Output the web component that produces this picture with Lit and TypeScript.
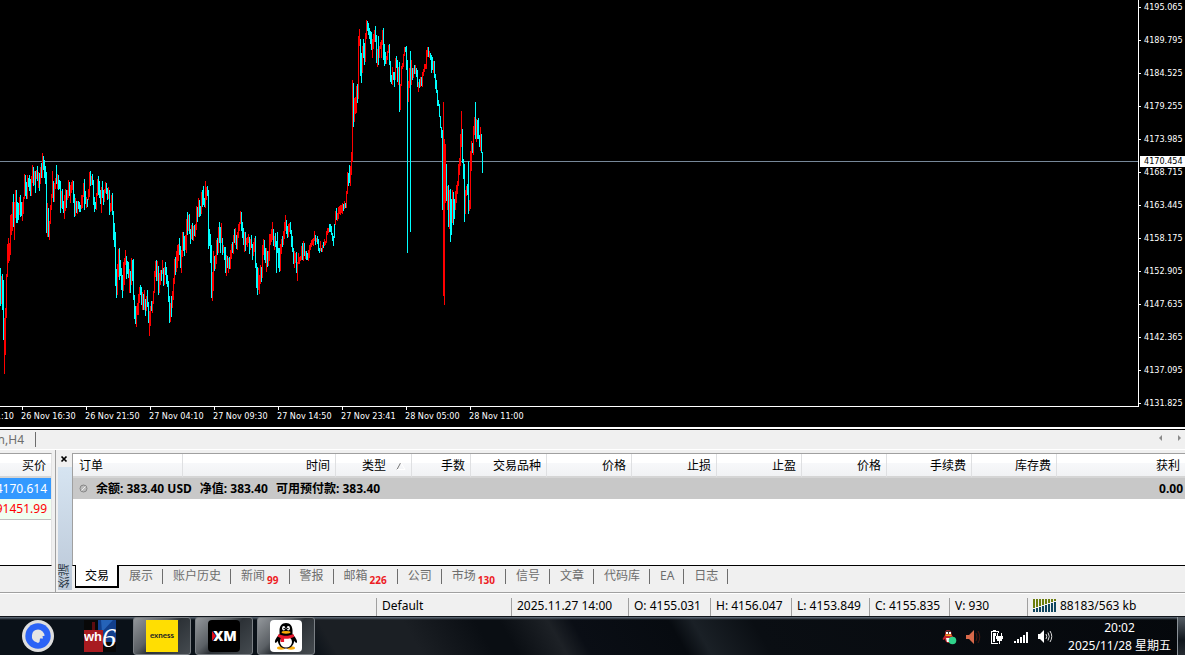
import { LitElement, html, svg, css } from "lit";
import { customElement } from "lit/decorators.js";

// One token per bar, left to right: r = rising, c = falling, then high-low in plot rows.
const BARS = `
c268-306 r276-304 c274-310 c280-340 r318-374 r308-355 r274-318 r244-277 r238-263 r243-261
r215-255 r214-235 r202-231 c194-227 r202-240 r190-218 c190-223 c202-223 c203-220 r197-215
c195-217 c202-216 r202-221 r197-214 r174-199 c175-196 c182-199 r175-199 c178-187 c175-191
c179-196 r176-196 r165-183 c167-186 r171-185 c171-193 r170-179 c166-181 r172-188 c173-191
r167-184 c163-178 r153-178 c156-170 c160-178 c166-184 c172-233 r203-237 c208-237 r221-240
r205-224 r194-210 r171-198 c181-202 r183-202 r178-189 c165-184 r174-189 c175-190 c180-189
c181-213 r191-208 c189-209 c201-213 r195-219 r189-211 c190-208 r190-200 r180-198 c182-196
r185-203 r182-193 r180-190 c181-203 c194-217 r198-216 c201-213 r201-214 c201-209 c202-212
c205-212 r195-209 r195-208 r183-197 c179-210 c191-204 r197-208 c199-207 r189-200 r172-197
c171-186 r176-185 c174-185 c180-205 c197-212 c202-209 r193-210 r179-196 c176-195 c181-198
c190-204 r187-213 c181-198 c190-205 r189-202 r182-193 c183-194 c188-200 r187-199 c190-215
r203-212 r195-211 c193-215 c211-240 c223-247 c232-286 c269-298 r264-295 r249-277 c248-280
c260-276 c268-290 c275-298 r262-291 r258-285 r250-265 c256-279 c261-274 c262-278 r269-293
c271-293 r258-285 c260-281 c259-300 c295-319 c306-324 r306-327 r303-315 r294-315 r287-303
c285-295 c287-305 r292-310 c294-310 r290-310 c299-316 r296-311 c290-307 c302-323 r311-336
r306-326 c301-311 r301-313 r291-304 r271-293 r261-277 c260-281 r261-281 c266-295 r273-293
r270-285 c270-281 r260-274 c268-286 r267-285 c262-275 c267-284 c275-287 c281-302 c296-323
r303-322 c296-317 r291-308 r278-300 r259-284 c257-275 r251-272 r245-268 r244-261 c238-255
c246-268 r250-273 r232-257 c232-251 c236-256 r235-250 r219-253 c212-235 r215-231 c214-234
c229-244 r225-239 c223-240 r226-241 c225-236 r224-237 r206-230 c207-222 r198-217 c200-217
c206-216 r192-214 c190-207 c186-205 c198-207 r181-208 r187-200 c186-196 c190-249 c229-246
c234-263 c245-298 r272-301 r251-291 c256-271 r255-269 r240-264 c238-255 r227-253 c222-243
c227-253 r223-243 c238-255 r245-253 c247-260 c247-273 r255-276 c256-268 r258-273 c257-269
r250-269 r244-259 c242-253 r235-254 c229-243 r228-245 c235-249 r232-250 r224-238 r222-231
r211-224 c212-231 c222-238 c228-245 r232-252 c232-251 r238-245 r237-247 r234-243 c237-254
r239-250 c235-248 c244-260 r242-256 r238-252 c236-268 c263-288 c267-295 r268-290 r275-294
r265-284 c267-282 r245-278 r239-255 c240-260 c248-263 r248-272 c251-267 r251-266 r234-261
r234-245 r229-242 r222-240 c229-246 r236-250 c233-247 c241-273 c232-253 c248-268 c248-272
r244-271 r239-254 c236-247 r231-245 r222-239 r215-231 c220-234 c226-238 r224-237 r223-232
c222-234 c230-247 c236-252 c248-264 r251-268 r253-263 c252-273 r262-281 r253-264 r257-264
r256-261 r246-260 c243-260 r241-261 c243-256 r251-259 c251-260 c253-260 r250-261 r245-258
r243-250 r240-247 r239-245 r238-246 r231-241 c235-245 r238-242 c236-244 c239-251 c248-253
r241-251 c248-252 r245-252 c242-248 r239-246 r241-245 r231-243 r228-235 r228-233 c224-232
c224-232 c226-235 c233-241 c236-246 c224-238 r211-225 c208-220 r213-221 r207-219 r206-214
r205-215 r205-213 r203-214 c204-211 r201-209 c203-208 r191-208 r172-194 c173-186 c165-183
r166-186 r152-175 r80-162 c83-127 r98-122 r97-114 r86-113 c84-103 r36-99 r29-46
c39-76 c53-83 r46-73 c39-58 c43-65 r33-62 r20-39 c21-31 c23-35 c28-39
c31-44 c32-50 r39-58 r34-49 r30-42 c26-42 c35-63 r49-67 c36-65 r46-58
r42-49 r40-58 r30-45 c28-60 c44-66 c52-64 r56-64 r51-60 r45-53 c44-65
c61-82 c75-84 r67-85 c72-80 c72-87 r58-80 c56-68 c60-82 r67-85 c62-112
r84-110 r66-86 r63-69 r54-67 r47-56 c47-52 c46-70 c60-253 r81-102 r68-88
c51-232 r60-85 c68-80 r68-78 c65-74 r65-74 c68-77 c70-87 r82-92 c79-88
r77-87 c77-86 r72-87 r69-76 r64-72 r64-69 r50-69 r47-57 c47-57 r51-58
c53-60 c55-73 c57-70 r61-73 c61-78 c74-89 c80-93 c90-106 c100-106 c104-117
c116-128 c127-138 c130-210 r102-296 r139-305 r144-203 c164-201 r186-210 c185-227 r190-229
c189-242 c199-235 r190-223 c192-225 c199-219 r191-210 r185-203 r181-194 r164-186 r158-175
r134-166 r111-147 c129-163 c159-179 c164-222 r190-214 r186-196 c184-195 c161-214 r200-211
r151-209 r141-171 c143-153 r126-155 r117-135 c102-139 r119-142 c120-139 c118-139 c135-147
r127-151 c134-153 c152-173`
  .trim()
  .split(/\s+/);

const barPath = (kind: string): string =>
  BARS.map((bar, x) => {
    if (bar[0] !== kind) return "";
    const [high, low] = bar.slice(1).split("-").map(Number);
    return `M${x} ${high}h1v${low - high}h-1z`;
  }).join("");

const PRICES = ["4195.065", "4189.795", "4184.525", "4179.255", "4173.985", "4168.715", "4163.445",
  "4158.175", "4152.905", "4147.635", "4142.365", "4137.095", "4131.825"];

const TIMES = ["26 Nov 16:30", "26 Nov 21:50", "27 Nov 04:10", "27 Nov 09:30", "27 Nov 14:50",
  "27 Nov 23:41", "28 Nov 05:00", "28 Nov 11:00"];

@customElement("price-chart")
export class PriceChart extends LitElement {
  static styles = css`
    :host {
      display: grid;
      grid-template-columns: minmax(0, 1fr) 47px;
      grid-template-rows: 406px 21px;
      background: #000;
      color: #fff;
      font: 9px/11px "DejaVu Sans Condensed", "DejaVu Sans", sans-serif;
    }
    .plot { display: block; width: 100%; height: 100%; }
    .rise { fill: #f00; }
    .fall { fill: #0ff; }
    .bid { fill: #778899; }
    .prices {
      position: relative;
      display: flex;
      flex-direction: column;
      border-left: 1px solid #fff;
      height: 407px;
      overflow: hidden;
    }
    .price {
      flex: none;
      display: flex;
      align-items: center;
      gap: 3px;
      height: 33px;
    }
    .price:first-child { margin-top: -9px; }
    .price::before { content: ""; width: 2px; height: 1px; background: #fff; }
    .current {
      position: absolute;
      left: 1px;
      right: 0;
      top: 156px;
      padding-left: 4px;
      background: #fff;
      color: #000;
    }
    .times {
      display: flex;
      border-top: 1px solid #fff;
      line-height: 13px;
      white-space: nowrap;
      overflow: hidden;
    }
    .time { width: 64px; flex: none; }
    .time::before {
      content: "";
      display: block;
      width: 1px;
      height: 3px;
      margin-left: 1px;
      background: #fff;
    }
    .first { width: 21px; display: flex; flex-direction: column; align-items: flex-end; }
    .first span { padding-right: 7px; }
    .first::before { visibility: hidden; }
  `;

  render() {
    return html`
      <svg class="plot" shape-rendering="crispEdges" role="img" aria-label="H4">
        <rect class="bid" x="0" y="161" width="100%" height="1"></rect>
        ${svg`<path class="rise" d=${barPath("r")}></path><path class="fall" d=${barPath("c")}></path>`}
      </svg>
      <div class="prices">
        ${PRICES.map((p) => html`<div class="price">${p}</div>`)}
        <div class="current">4170.454</div>
      </div>
      <div class="times">
        <div class="time first"><span>1:10</span></div>
        ${TIMES.map((t) => html`<div class="time">${t}</div>`)}
      </div>
    `;
  }
}

const COLUMNS = [
  { name: "订单", width: 110 },
  { name: "时间", width: 153 },
  { name: "类型", width: 76 },
  { name: "手数", width: 59 },
  { name: "交易品种", width: 76 },
  { name: "价格", width: 85 },
  { name: "止损", width: 85 },
  { name: "止盈", width: 85 },
  { name: "价格", width: 85 },
  { name: "手续费", width: 85 },
  { name: "库存费", width: 85 },
  { name: "获利", width: 0 },
];

const TABS: { name: string; count?: number }[] = [
  { name: "交易" }, { name: "展示" }, { name: "账户历史" }, { name: "新闻", count: 99 },
  { name: "警报" }, { name: "邮箱", count: 226 }, { name: "公司" }, { name: "市场", count: 130 },
  { name: "信号" }, { name: "文章" }, { name: "代码库" }, { name: "EA" }, { name: "日志" },
];

@customElement("terminal-panels")
export class TerminalPanels extends LitElement {
  static styles = css`
    * { box-sizing: border-box; }
    :host {
      display: flex;
      height: 143px;
      background: #f0f0f0;
      border-bottom: 1px solid #a0a0a0;
      overflow: hidden;
    }
    table { border-collapse: separate; border-spacing: 0; table-layout: fixed; width: 100%; }
    th, td { padding: 0 5px; font-weight: 400; text-align: right; white-space: nowrap; }
    th {
      height: 24px;
      padding-top: 2px;
      line-height: 20px;
      border-right: 1px solid #dfe0e2;
      border-bottom: 2px solid #d5d5d5;
      background: linear-gradient(#fff 40%, #f7f8fa 42%, #f1f2f4);
    }
    th:last-child { border-right: 0; }
    button { font: inherit; color: inherit; background: none; border: 0; padding: 0; }

    .watch { width: 56px; flex: none; padding-top: 3px; border-right: 1px solid #a0a0a0; }
    .quotes {
      display: flex;
      flex-direction: column;
      align-items: flex-end;
      height: 113px;
      width: 52px;
      overflow: hidden;
      background: #fff;
      border-top: 1px solid #a0a0a0;
      border-right: 1px solid #e3e3e3;
      border-bottom: 1px solid #000;
    }
    .quotes table { width: 60px; flex: none; }
    .quotes td { height: 21px; padding: 0 4px; }
    .up td { background: #39f; color: #fff; }
    .down td { background: #f0fff0; color: #f00; border-bottom: 1px solid #c0c0c0; }

    .grip {
      width: 16px;
      flex: none;
      display: flex;
      flex-direction: column;
      align-items: center;
      padding: 4px 0 2px 2px;
    }
    .close { display: flex; width: 10px; height: 13px; padding-top: 1px; }
    .caption {
      flex: 1;
      width: 14px;
      display: flex;
      flex-direction: column;
      justify-content: flex-end;
      background: linear-gradient(#d6e4f1, #bbc8d8);
      color: #2f3c4a;
      line-height: 14px;
    }
    .caption span { writing-mode: vertical-rl; transform: rotate(180deg); padding-top: 2px; }

    .terminal { flex: 1; min-width: 0; padding-top: 3px; display: flex; flex-direction: column; }
    .sheet {
      height: 113px;
      background: #fff;
      border-top: 1px solid #a0a0a0;
      border-left: 1px solid #a0a0a0;
      border-bottom: 1px solid #000;
    }
    .sheet th:first-child { text-align: left; padding-left: 6px; }
    .sheet td { height: 21px; padding: 0 2px 0 6px; background: #c8c8c8; font-weight: 700; }
    .sheet .balance { text-align: left; }
    .summary { display: flex; align-items: center; gap: 8px; }
    .kind { display: flex; align-items: center; justify-content: flex-end; gap: 10px; }

    .tabs { display: flex; height: 23px; padding-left: 3px; color: #6d6d6d; }
    .tab {
      display: flex;
      align-items: center;
      height: 20px;
      padding: 0 10px;
      position: relative;
      white-space: nowrap;
    }
    .tab::after {
      content: "";
      position: absolute;
      right: 0;
      top: 3px;
      height: 15px;
      width: 1px;
      background: #6d6d6d;
    }
    .count {
      align-self: flex-end;
      margin: 0 1px 0 2px;
      font: 700 10px/11px "Noto Sans", sans-serif;
      color: #ed1c24;
    }
    .active {
      height: 23px;
      margin-top: -1px;
      padding: 0 8px 0 9px;
      border: 1px solid #000;
      border-top: 0;
      border-right-width: 2px;
      border-bottom-width: 2px;
      background: #fff;
      color: #000;
    }
    .active::after { display: none; }
  `;

  render() {
    return html`
      <section class="watch">
        <div class="quotes">
          <table>
            <thead><tr><th>买价</th></tr></thead>
            <tbody>
              <tr class="up"><td>4170.614</td></tr>
              <tr class="down"><td>91451.99</td></tr>
            </tbody>
          </table>
        </div>
      </section>
      <div class="grip">
        <button class="close" aria-label="关闭">
          <svg width="8" height="8" viewBox="0 0 8 8"><path d="M1.5 1.5l5 5M6.5 1.5l-5 5" stroke="#000" stroke-width="1.7"></path></svg>
        </button>
        <div class="caption"><span>终端</span></div>
      </div>
      <section class="terminal">
        <div class="sheet">
          <table>
            <colgroup>
              ${COLUMNS.map((c) => html`<col style=${c.width ? `width:${c.width}px` : ""}>`)}
            </colgroup>
            <thead>
              <tr>
                ${COLUMNS.map((c) => c.name === "类型"
                  ? html`<th><span class="kind">类型<svg width="10" height="8" viewBox="0 0 10 8"><path d="M1 7.500L4.500 1" stroke="#777" fill="none"></path><path d="M5 1L9 7.500H1" stroke="#fff" fill="none"></path></svg></span></th>`
                  : html`<th>${c.name}</th>`)}
              </tr>
            </thead>
            <tbody>
              <tr>
                <td class="balance" colspan="11">
                  <span class="summary"><svg width="9" height="9" viewBox="0 0 9 9"><circle cx="4.500" cy="4.500" r="3.500" fill="#bbb" stroke="#858585"></circle><path d="M2.500 6.500l4-4" stroke="#eee"></path></svg><span>余额: 383.40 USD</span><span>净值: 383.40</span><span>可用预付款: 383.40</span></span>
                </td>
                <td>0.00</td>
              </tr>
            </tbody>
          </table>
        </div>
        <nav class="tabs">
          ${TABS.map((t, i) => html`<button class="tab ${i === 0 ? "active" : ""}">${t.name}${t.count ? html`<span class="count">${t.count}</span>` : ""}</button>`)}
        </nav>
      </section>
    `;
  }
}

@customElement("task-bar")
export class TaskBar extends LitElement {
  static styles = css`
    * { box-sizing: border-box; }
    :host {
      display: flex;
      height: 39px;
      border-top: 1px solid #10151b;
      background:
        linear-gradient(#66727f, #2b364100 3px),
        linear-gradient(60deg, #0a1118 26%, #1b1f24 28%, #1b1f24 35%, #0a0e13 41%, #0a0e13 43%, #1d2126 47%, #0a0e15 49%, #070b10 57%, #1a2026 59%, #0a0e13 64%, #05080c);
      color: #fff;
    }
    button { border: 0; padding: 0; background: none; font: inherit; color: inherit; }
    svg { display: block; }
    .apps { display: flex; flex: 1; padding-left: 9px; gap: 4px; }
    .app {
      width: 58px;
      height: 38px;
      display: flex;
      align-items: center;
      justify-content: center;
      border-radius: 3px;
    }
    .open {
      border: 1px solid #7b8085;
      background: linear-gradient(135deg, #93979b 0%, #5b6065 38%, #2c3136 52%, #454b50 100%);
    }
    .tray { display: flex; align-items: center; gap: 8px; padding: 2px 15px 0 0; }
    .tray button { width: 16px; height: 16px; }
    .clock { text-align: center; line-height: 18px; padding: 2px 6px 0 0; white-space: nowrap; }
    .desktop {
      width: 8px;
      border-left: 1px solid #8b9299;
      background: linear-gradient(#555d65, #10161c 60%, #262c32);
    }
  `;

  render() {
    return html`
      <div class="apps">
        <button class="app" aria-label="浏览器">
          <svg width="32" height="32" viewBox="0 0 32 32">
            <circle cx="16" cy="16" r="16" fill="#dedede"></circle>
            <circle cx="16" cy="16" r="12.700" fill="#2b63f6"></circle>
            <path d="M16 9.500a6.500 6.500 0 0 1 6.500 6.500H20.500l.5 2.500h-3l-.5 3.500-1.500 1-1.500-.8A6.500 6.500 0 0 1 16 9.500z" fill="#e4e4e4"></path>
          </svg>
        </button>
        <button class="app" aria-label="wh6">
          <svg width="32" height="32" viewBox="0 0 32 32">
            <rect width="32" height="32" fill="#080808"></rect>
            <path d="M14 0h18v22H14z" fill="#123f8c"></path>
            <path d="M17 0h12L18 12z" fill="#2563b8"></path>
            <path d="M0 10h8V2h3v8h8v22H0z" fill="#a81b20"></path>
            <path d="M8 2h3v8H8z" fill="#5d0c10"></path>
            <text x="0" y="21" font-family="Liberation Sans" font-weight="700" font-size="13" fill="#fff">wh</text>
            <text x="18" y="27" font-family="Liberation Serif" font-style="italic" font-size="28" fill="#fff">6</text>
          </svg>
        </button>
        <button class="app open" aria-label="exness">
          <svg width="32" height="32" viewBox="0 0 32 32">
            <rect width="32" height="32" fill="#ffde02"></rect>
            <text x="16" y="18" text-anchor="middle" font-family="Lato" font-weight="700" font-size="8" fill="#222">exness</text>
          </svg>
        </button>
        <button class="app open" aria-label="XM">
          <svg width="32" height="32" viewBox="0 0 32 32">
            <rect width="32" height="32" rx="4" fill="#000"></rect>
            <path d="M4 11l4 5-4 5z" fill="#e3101c"></path>
            <text x="17" y="21" text-anchor="middle" font-family="Open Sans" font-weight="800" font-size="14" fill="#fff">XM</text>
          </svg>
        </button>
        <button class="app open" aria-label="QQ">
          <svg width="32" height="32" viewBox="0 0 32 32">
            <rect width="32" height="32" rx="4" fill="#fff"></rect>
            <ellipse cx="11" cy="28" rx="4" ry="1.700" fill="#faab07"></ellipse>
            <ellipse cx="21" cy="28" rx="4" ry="1.700" fill="#faab07"></ellipse>
            <path d="M16 3c-4.500 0-6.500 3.500-6.500 7.500v3.500C7 17 4.500 20 5 22.500c.5 1 2-.5 2.800-1.500C8.500 26 12 28.500 16 28.500s7.500-2.500 8.200-7.500c.8 1 2.300 2.500 2.800 1.500.5-2.500-2-5.500-4.500-8.500v-3.500C22.500 6.500 20.500 3 16 3z" fill="#000"></path>
            <ellipse cx="16" cy="22" rx="6" ry="5.500" fill="#fff"></ellipse>
            <ellipse cx="13.700" cy="8.300" rx="1.600" ry="2.300" fill="#fff"></ellipse>
            <ellipse cx="18.300" cy="8.300" rx="1.600" ry="2.300" fill="#fff"></ellipse>
            <circle cx="14.200" cy="8.600" r=".8" fill="#000"></circle>
            <circle cx="17.800" cy="8.600" r=".8" fill="#000"></circle>
            <ellipse cx="16" cy="12.300" rx="4.500" ry="1.400" fill="#faab07"></ellipse>
            <path d="M8.800 14c4 2.400 10.400 2.400 14.400 0l1.200 2.800c-2.400 1.400-6 2.200-10.300 2V22h-3.500v-4L7.500 16.600z" fill="#e8192c"></path>
          </svg>
        </button>
      </div>
      <div class="tray">
        <button aria-label="QQ">
          <svg width="16" height="16" viewBox="0 0 16 16">
            <path d="M7 1C4.800 1 4 2.500 4 4.500V6L1.500 10l1 1 1.500-1c.3 2.500 1.500 4 4 4s4-2 4-4l1-1-2.500-3.500v-1C10.500 2.500 9.500 1 7 1z" fill="#c3222b"></path>
            <path d="M4.500 4.500C4.500 2.500 5.500 1.500 7.300 1.500s2.700 1 2.700 3z" fill="#333"></path>
            <path d="M5 3h2v2H5zM8 3h2v2H8zM5 9h4v4H6z" fill="#fff"></path>
            <path d="M4.500 5.500h6v1.500h-6z" fill="#f0a020"></path>
            <circle cx="11.500" cy="11.500" r="3.800" fill="#2fd38a"></circle>
          </svg>
        </button>
        <button aria-label="音频">
          <svg width="16" height="16" viewBox="0 0 16 16">
            <path d="M1 6h3l5-5v14l-5-5H1z" fill="#d9694a"></path>
            <path d="M11 4q2 4 0 8M13 2q3.500 6 0 12" stroke="#4a180f" fill="none"></path>
          </svg>
        </button>
        <button aria-label="电源">
          <svg width="16" height="16" viewBox="0 0 16 16" shape-rendering="crispEdges">
            <path d="M4 1h3v1h3v2H9V3H3v11h6v1H2V2h2z" fill="#fff"></path>
            <path d="M4 4h3v3H6v6H4z" fill="#fff"></path>
            <path d="M7 7h7v3h-1v2h-2v3h-1v-3H8v-2H7zM8 4h1v3H8zM12 4h1v3h-1z" fill="#fff"></path>
          </svg>
        </button>
        <button aria-label="网络">
          <svg width="16" height="16" viewBox="0 0 16 16">
            <path d="M1 12h2v2H1zM4 10h2v4H4zM7 8h2v6H7zM10 6h2v8h-2zM13 3h2v11h-2z" fill="#fff"></path>
          </svg>
        </button>
        <button aria-label="音量">
          <svg width="16" height="16" viewBox="0 0 16 16">
            <path d="M1 5h2l4-4v13l-4-4H1z" fill="#fff"></path>
            <path d="M9 5q1.500 2.500 0 5M11 3.500q2.500 4 0 8M13 2q3.500 5.500 0 11" stroke="#ddd" fill="none"></path>
          </svg>
        </button>
      </div>
      <div class="clock">20:02<br>2025/11/28 星期五</div>
      <button class="desktop" aria-label="显示桌面"></button>
    `;
  }
}

@customElement("app-root")
export class AppRoot extends LitElement {
  static styles = css`
    * { box-sizing: border-box; }
    :host {
      display: block;
      background: #f0f0f0;
      color: #000;
      font: 12px/16px "Noto Sans", "Noto Sans CJK SC", sans-serif;
      overflow: hidden;
    }
    .charts {
      display: flex;
      align-items: center;
      height: 23px;
      padding-top: 1px;
      border-top: 2px solid #fff;
      border-bottom: 1px solid #fff;
      box-shadow: inset 0 1px #000;
      color: #6d6d6d;
    }
    .symbol {
      width: 36px;
      height: 15px;
      line-height: 15px;
      padding-right: 11px;
      border-right: 1px solid #6d6d6d;
      display: flex;
      justify-content: flex-end;
      overflow: hidden;
    }
    .scroll { margin-left: auto; display: flex; gap: 11px; padding: 0 2px 3px 0; }
    .scroll button { border: 0; padding: 0; background: none; width: 8px; height: 8px; display: flex; }
    .status {
      display: flex;
      height: 23px;
      padding-top: 4px;
      border-top: 1px solid #fff;
      line-height: 15px;
      white-space: nowrap;
    }
    .cell { flex: none; padding-left: 5px; border-left: 1px solid #a0a0a0; }
    .hint { flex: 1; }
    .profile { width: 135px; }
    .date { width: 117px; }
    .open { width: 82px; }
    .high { width: 81px; }
    .low { width: 78px; }
    .close { width: 80px; }
    .volume { width: 78px; }
    .traffic { width: 158px; display: flex; align-items: flex-start; gap: 4px; }
    .meter { margin-top: 1px; }
  `;

  render() {
    return html`
      <price-chart></price-chart>
      <div class="charts">
        <div class="symbol"><span>n,H4</span></div>
        <div class="scroll">
          <button aria-label="向左"><svg width="8" height="8" viewBox="0 0 8 8"><path d="M6 1v6L3 4z" fill="#8a8a8a"></path></svg></button>
          <button aria-label="向右"><svg width="8" height="8" viewBox="0 0 8 8"><path d="M3 1v6l3-3z" fill="#8a8a8a"></path></svg></button>
        </div>
      </div>
      <terminal-panels></terminal-panels>
      <footer class="status">
        <div class="hint"></div>
        <div class="cell profile">Default</div>
        <div class="cell date">2025.11.27 14:00</div>
        <div class="cell open">O: 4155.031</div>
        <div class="cell high">H: 4156.047</div>
        <div class="cell low">L: 4153.849</div>
        <div class="cell close">C: 4155.835</div>
        <div class="cell volume">V: 930</div>
        <div class="cell traffic">
          <svg class="meter" width="23" height="13" viewBox="0 0 23 13" shape-rendering="crispEdges">
            ${[0, 1, 2, 3, 4, 5, 6, 7].map((i) => svg`<rect x=${i * 3} y="0" width="2" height=${9 - i} fill="#6b7d0c"></rect><rect x=${i * 3} y=${10 - i} width="2" height=${3 + i} fill="#0f4660"></rect>`)}
          </svg>
          88183/563 kb
        </div>
      </footer>
      <task-bar></task-bar>
    `;
  }
}
